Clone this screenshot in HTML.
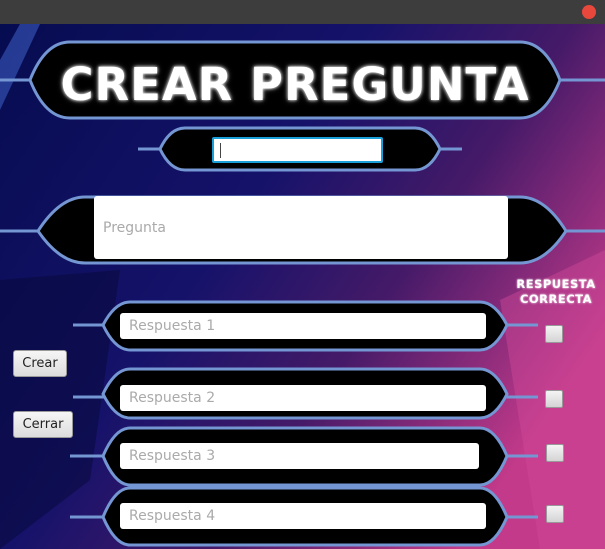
<!DOCTYPE html>
<html><head><meta charset="utf-8"><style>
body{margin:0;width:605px;height:549px;overflow:hidden;position:relative;font-family:"Liberation Sans","DejaVu Sans",sans-serif}
.bar{position:absolute;left:0;top:0;width:605px;height:24px;background:#3d3d3d}
.dot{position:absolute;left:582px;top:5px;width:14px;height:14px;border-radius:50%;background:#e8483c}
svg{position:absolute;left:0;top:24px}
.in{position:absolute;background:#fff;border-radius:3px;color:#aaa;font-size:14px;font-family:"DejaVu Sans",sans-serif;box-sizing:border-box;padding-left:9px;display:flex;align-items:center}
.btn{position:absolute;background:linear-gradient(#f6f6f6,#dcdcdc);border:1px solid #999;border-radius:3px;font-size:13px;color:#222;font-family:"DejaVu Sans",sans-serif;display:flex;align-items:center;justify-content:center;box-sizing:border-box}
.cb{position:absolute;width:18px;height:18px;background:linear-gradient(#f4f4f4,#d4d4d4);border:1px solid #999;border-radius:2px;box-sizing:border-box}
.title{position:absolute;left:30px;width:530px;top:58px;text-align:center;color:#fff;font:900 45px "DejaVu Sans",sans-serif;letter-spacing:1px;text-shadow:0 0 3px #fff,0 0 6px #888}
.rc{position:absolute;left:508px;top:277px;width:96px;text-align:center;color:#fff;font:900 11.5px/15px "DejaVu Sans",sans-serif;letter-spacing:0.5px;text-shadow:0 0 2px #fff}
</style></head><body>
<div class="bar"></div><div class="dot"></div>
<svg width="605" height="525" viewBox="0 24 605 525">
<defs>
<linearGradient id="bg" x1="0" y1="0" x2="1" y2="0.6">
<stop offset="0" stop-color="#060c50"/><stop offset="0.45" stop-color="#15126a"/><stop offset="0.7" stop-color="#451a68"/><stop offset="1" stop-color="#c43a8a"/>
</linearGradient>
</defs>
<rect x="0" y="24" width="605" height="525" fill="url(#bg)"/>
<polygon points="0,280 120,270 90,480 0,549" fill="#050838" opacity="0.5"/>
<polygon points="500,300 605,250 605,549 540,549" fill="#d04a9a" opacity="0.45"/>
<polygon points="0,60 20,24 40,24 0,110" fill="#3a5ac0" opacity="0.6"/>
<g fill="#000" stroke="#7496d2" stroke-width="3">
<line x1="0" y1="80" x2="35" y2="80"/><line x1="555" y1="80" x2="605" y2="80"/>
<path d="M30 80 Q45 42 70 42 L520 42 Q545 42 560 80 Q545 118 520 118 L70 118 Q45 118 30 80Z"/>
<line x1="138" y1="149" x2="165" y2="149"/><line x1="435" y1="149" x2="462" y2="149"/>
<path d="M160 149 Q170 128 185 128 L415 128 Q430 128 440 149 Q430 170 415 170 L185 170 Q170 170 160 149Z"/>
<line x1="0" y1="231" x2="42" y2="231"/><line x1="562" y1="231" x2="605" y2="231"/>
<path d="M38 231 Q60 197 85 197 L520 197 Q545 197 566 231 Q545 263 520 263 L85 263 Q60 263 38 231Z"/>
<line x1="73" y1="325" x2="106" y2="325"/><line x1="504" y1="325" x2="538" y2="325"/>
<path d="M103 325 Q115 302 130 302 L480 302 Q495 302 507 325 Q495 350 480 350 L130 350 Q115 350 103 325Z"/>
<line x1="73" y1="397" x2="106" y2="397"/><line x1="504" y1="397" x2="538" y2="397"/>
<path d="M103 394 Q115 369 130 369 L480 369 Q495 369 507 394 Q495 418 480 418 L130 418 Q115 418 103 394Z"/>
<line x1="70" y1="456" x2="106" y2="456"/><line x1="504" y1="456" x2="538" y2="456"/>
<path d="M103 456 Q115 428 130 428 L480 428 Q495 428 507 456 Q495 485 480 485 L130 485 Q115 485 103 456Z"/>
<line x1="70" y1="517" x2="106" y2="517"/><line x1="504" y1="517" x2="538" y2="517"/>
<path d="M103 517 Q115 488 130 488 L480 488 Q495 488 507 517 Q495 545 480 545 L130 545 Q115 545 103 517Z"/>
</g>
</svg>
<div class="title">CREAR PREGUNTA</div>
<div class="in" style="left:212px;top:137px;width:171px;height:26px;border:2px solid #1aa0d8;border-radius:2px;padding-left:6px"><span style="width:1px;height:15px;background:#444"></span></div>
<div class="in" style="left:94px;top:196px;width:414px;height:63px">Pregunta</div>
<div class="rc">RESPUESTA<br>CORRECTA</div>
<div class="in" style="left:120px;top:313px;width:366px;height:26px">Respuesta 1</div>
<div class="in" style="left:120px;top:385px;width:366px;height:26px">Respuesta 2</div>
<div class="in" style="left:120px;top:443px;width:359px;height:26px">Respuesta 3</div>
<div class="in" style="left:120px;top:503px;width:366px;height:26px">Respuesta 4</div>
<div class="btn" style="left:13px;top:350px;width:54px;height:27px">Crear</div>
<div class="btn" style="left:13px;top:411px;width:60px;height:27px">Cerrar</div>
<div class="cb" style="left:545px;top:325px"></div>
<div class="cb" style="left:545px;top:390px"></div>
<div class="cb" style="left:546px;top:444px"></div>
<div class="cb" style="left:546px;top:505px"></div>
</body></html>
